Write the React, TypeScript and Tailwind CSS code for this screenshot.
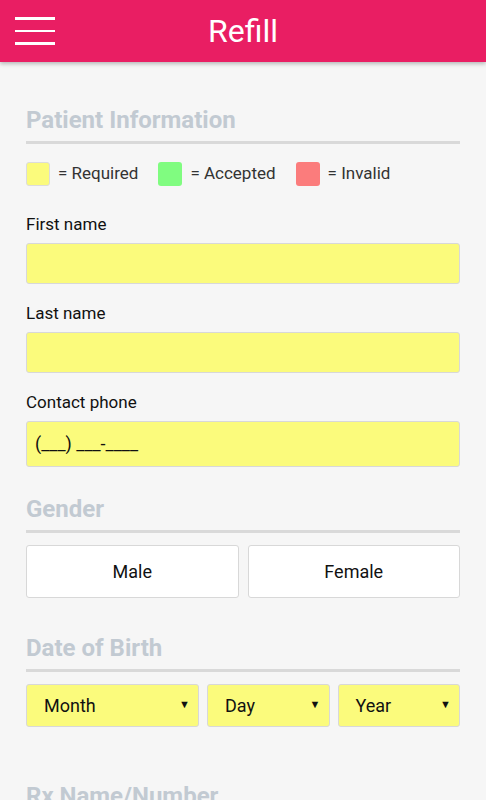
import { useState } from "react";

const legend = [
  { label: "= Required", className: "bg-[#fbfb7c] border border-[#dcdcdc]" },
  { label: "= Accepted", className: "bg-[#80fc80]" },
  { label: "= Invalid", className: "bg-[#fb7c7c]" },
];

const SectionTitle = ({ title }: { title: string }) => (
  <div className="border-b-[3px] border-[#d9d9d9] pb-[6px]">
    <h2 className="text-[24px] leading-[30px] font-bold text-[#c2cad2]">{title}</h2>
  </div>
);

const Field = ({
  label,
  placeholder,
  tall,
  first,
}: {
  label: string;
  placeholder?: string;
  tall?: boolean;
  first?: boolean;
}) => (
  <div className={first ? "mt-[25px]" : "mt-[17px]"}>
    <label className="block text-[17px] leading-[24px] text-[#111]">{label}</label>
    <input
      placeholder={placeholder}
      className={`mt-[7px] w-full rounded-[3px] border border-[#d8d8d8] bg-[#fbfb7c] px-[8px] text-[18px] text-[#111] placeholder:text-[#111] outline-none ${
        tall ? "h-[46px]" : "h-[41px]"
      }`}
    />
  </div>
);

const Select = ({ label, className }: { label: string; className: string }) => (
  <div
    className={`flex h-[43px] items-center justify-between rounded-[3px] border border-[#d8d8d8] bg-[#fbfb7c] pl-[17px] pr-[8px] text-[18px] text-[#111] ${className}`}
  >
    <span>{label}</span>
    <span className="text-[11px]">▼</span>
  </div>
);

export default function App() {
  const [gender, setGender] = useState<string | null>(null);

  return (
    <div className="min-h-[800px] w-full bg-[#f6f6f6] font-['Roboto',sans-serif]">
      <header className="relative flex h-[62px] items-center justify-center bg-[#e91e63] shadow-[0_2px_4px_rgba(0,0,0,0.25)]">
        <button className="absolute left-[15px] top-[17px] flex w-[40px] flex-col gap-[10px]">
          <span className="block h-[2.5px] w-full bg-white" />
          <span className="block h-[2.5px] w-full bg-white" />
          <span className="block h-[2.5px] w-full bg-white" />
        </button>
        <h1 className="text-[32px] leading-none text-white">Refill</h1>
      </header>

      <main className="px-[26px] pt-[43px]">
        <SectionTitle title="Patient Information" />

        <div className="mt-[17px] flex items-center">
          {legend.map((item, i) => (
            <div key={i} className="mr-[20px] flex items-center">
              <span className={`block h-[24px] w-[24px] rounded-[3px] ${item.className}`} />
              <span className="ml-[8px] text-[17px] text-[#333]">{item.label}</span>
            </div>
          ))}
        </div>

        <Field label="First name" first />
        <Field label="Last name" />
        <Field label="Contact phone" placeholder="(___) ___-____" tall />

        <div className="mt-[27px]">
          <SectionTitle title="Gender" />
          <div className="mt-[12px] flex gap-[9px]">
            {["Male", "Female"].map((g) => (
              <button
                key={g}
                onClick={() => setGender(g)}
                className={`h-[53px] flex-1 rounded-[3px] border border-[#d8d8d8] text-[18px] text-[#111] ${
                  gender === g ? "bg-[#eee]" : "bg-white"
                }`}
              >
                {g}
              </button>
            ))}
          </div>
        </div>

        <div className="mt-[35px]">
          <SectionTitle title="Date of Birth" />
          <div className="mt-[12px] flex gap-[8px]">
            <Select label="Month" className="w-[173px]" />
            <Select label="Day" className="flex-1" />
            <Select label="Year" className="flex-1" />
          </div>
        </div>

        <div className="mt-[54px] pb-[40px]">
          <SectionTitle title="Rx Name/Number" />
        </div>
      </main>
    </div>
  );
}
